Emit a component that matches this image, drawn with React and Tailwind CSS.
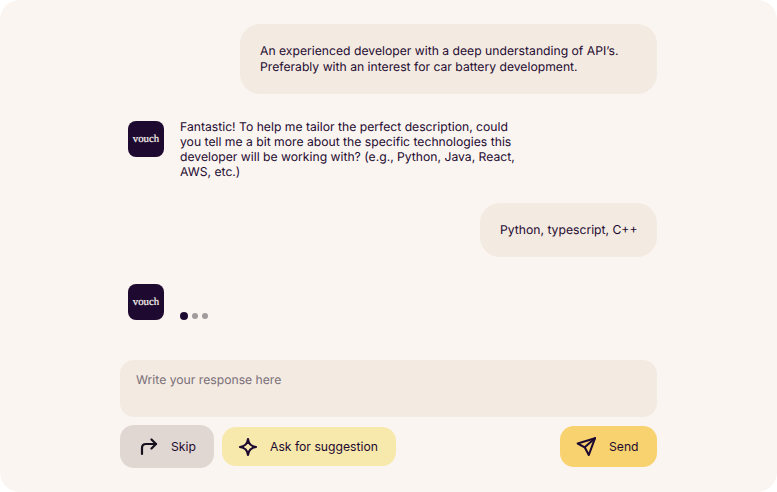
import React from "react";

function Avatar() {
  return (
    <div className="flex h-9 w-9 shrink-0 items-center justify-center rounded-lg bg-[#1e0a30]">
      <span className="font-['Liberation_Serif',serif] text-[10.8px] leading-none font-normal text-[#f9f4f0] [-webkit-text-stroke:0.2px_#f9f4f0]">vouch</span>
    </div>
  );
}

function UserBubble({ children, className }) {
  return (
    <div className={"self-end rounded-[20px] bg-[#f3eae2] px-5 py-[19px] " + className}>
      {children}
    </div>
  );
}

export default function App() {
  return (
    <div className="h-[492px] w-[777px] bg-white">
      <div className="flex h-full flex-col rounded-[20px] bg-[#faf5f1] pt-6 pr-[120px] pl-[120px] font-['Inter',sans-serif] text-[12.18px] leading-4 text-[#1e0a30] [text-rendering:geometricPrecision]">
        <UserBubble className="w-[417px]">
          <p>An experienced developer with a deep understanding of API’s.</p>
          <p>Preferably with an interest for car battery development.</p>
        </UserBubble>

        <div className="mt-[25px] flex gap-4 pl-2">
          <div className="pt-[2px]">
            <Avatar />
          </div>
          <p className="w-[340px] leading-[15px]">
            Fantastic! To help me tailor the perfect description, could you tell me a bit more about the specific technologies this developer will be working with? (e.g., Python, Java, React, AWS, etc.)
          </p>
        </div>

        <UserBubble className="mt-6 w-[177px] whitespace-nowrap">Python, typescript, C++</UserBubble>

        <div className="mt-[27px] flex gap-4 pl-2">
          <Avatar />
          <div className="flex items-end gap-1">
            <span className="h-2 w-2 rounded-full bg-[#1e0a30]" />
            <span className="mb-[1px] h-[6px] w-[6px] rounded-full bg-[#a09c9c]" />
            <span className="mb-[1px] h-[6px] w-[6px] rounded-full bg-[#a09c9c]" />
          </div>
        </div>

        <div className="mt-10 h-[57px] rounded-[14px] bg-[#f3eae2] px-4 py-3 text-[#7a6f78]">
          Write your response here
        </div>

        <div className="mt-2 flex items-center">
          <button className="flex h-[43px] w-[94px] items-center gap-[13px] rounded-[14px] bg-[#e0d7d2] pl-5">
            <svg width="18" height="18" viewBox="0 0 18 18" fill="none" stroke="#15101c" strokeWidth="2.2" strokeLinecap="round" strokeLinejoin="round">
              <path d="M2 16V10C2 7.5 3.5 6 6 6H16" />
              <path d="M11.5 1.5L16 6L11.5 10.5" />
            </svg>
            <span>Skip</span>
          </button>
          <button className="ml-2 flex h-[39px] w-[174px] items-center gap-3 rounded-[14px] bg-[#f7e8ab] pl-4">
            <svg width="20" height="20" viewBox="0 0 20 20" fill="none" stroke="#1e0a30" strokeWidth="2.2" strokeLinejoin="round">
              <path d="M10 2C10.5 6.5 13.5 9.5 18 10C13.5 10.5 10.5 13.5 10 18C9.5 13.5 6.5 10.5 2 10C6.5 9.5 9.5 6.5 10 2Z" />
            </svg>
            <span>Ask for suggestion</span>
          </button>
          <button className="ml-auto flex h-[41px] w-[97px] items-center gap-[13px] rounded-[14px] bg-[#f7d26f] pl-4">
            <svg width="20" height="20" viewBox="0 0 20 20" fill="none" stroke="#1e0a30" strokeWidth="2.1" strokeLinecap="round" strokeLinejoin="round">
              <path d="M19 1.2L1.7 6.5L8.7 10.3L12.8 18L19 1.2Z" />
              <path d="M8.7 10.3L19 1.2" />
            </svg>
            <span>Send</span>
          </button>
        </div>
      </div>
    </div>
  );
}
